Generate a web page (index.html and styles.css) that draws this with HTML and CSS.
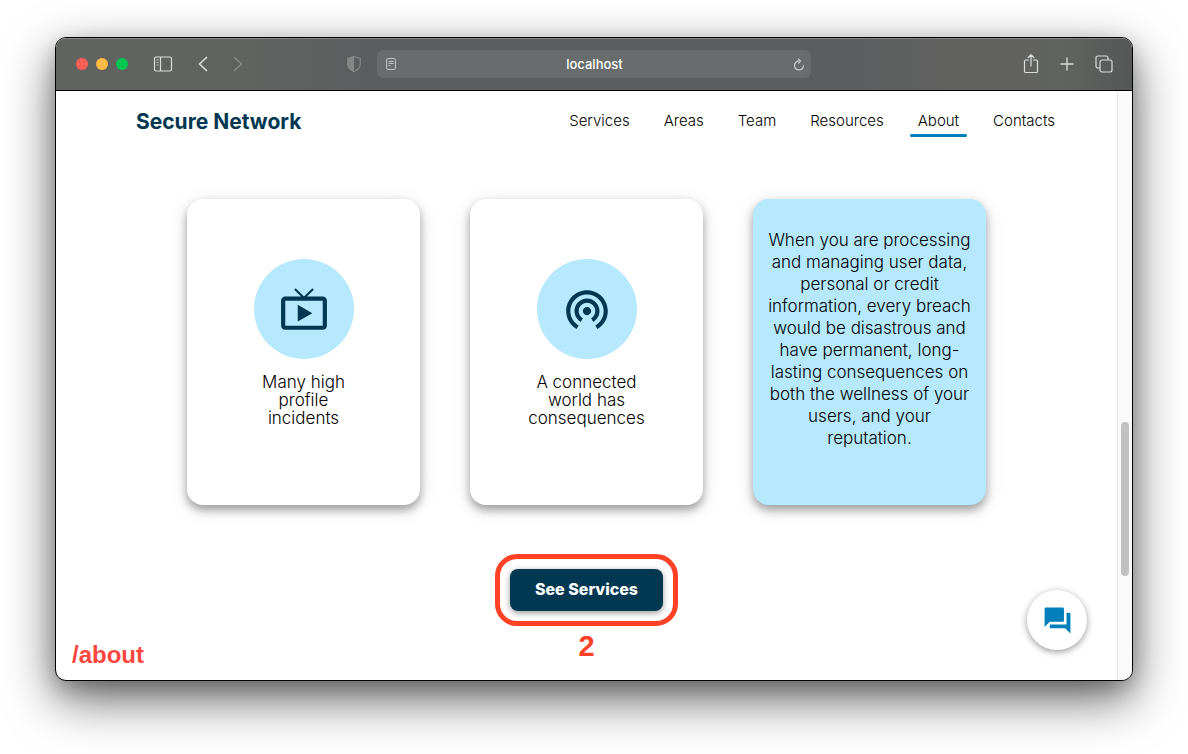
FILE: index.html
```html
<!DOCTYPE html>
<html lang="en">
<head>
<meta charset="utf-8">
<meta name="viewport" content="width=device-width, initial-scale=1">
<title>Secure Network</title>
<link rel="stylesheet" href="styles.css">
</head>
<body>
<div class="window">
  <div class="toolbar">
    <div class="toolbar-left">
      <div class="lights"><span class="light red"></span><span class="light amber"></span><span class="light green"></span></div>
      <button class="tool sidebar-btn" type="button" aria-label="Sidebar">
        <svg width="20" height="16" viewBox="0 0 20 16" fill="none" stroke="currentColor"><rect x="1.5" y="1" width="17" height="14" rx="1.5" stroke-width="1.2"/><path d="M7.500 1v14" stroke-width="1.2"/><path d="M3.500 4h2M3.500 6.500h2M3.500 9h2" stroke-width=".8"/></svg>
      </button>
      <button class="tool back-btn" type="button" aria-label="Back">
        <svg width="10" height="16" viewBox="0 0 10 16" fill="none" stroke="currentColor" stroke-width="1.700" stroke-linecap="round" stroke-linejoin="round"><path d="M8.500 1.500 1.500 8l7 6.500"/></svg>
      </button>
      <button class="tool forward-btn" type="button" aria-label="Forward">
        <svg width="10" height="16" viewBox="0 0 10 16" fill="none" stroke="currentColor" stroke-width="1.500" stroke-linecap="round" stroke-linejoin="round"><path d="m1.500 1.500 7 6.500-7 6.500"/></svg>
      </button>
      <button class="tool shield-btn" type="button" aria-label="Privacy report">
        <svg width="16" height="18" viewBox="0 0 16 18"><path d="M8 1.500 14.300 3.500V9c0 3.500-2.300 5.800-6.300 7.700C4 14.800 1.700 12.500 1.700 9V3.500z" fill="none" stroke="currentColor" stroke-width="1.200"/><path d="M8 1.500v15.200C4 14.800 1.700 12.500 1.700 9V3.500z" fill="currentColor"/></svg>
      </button>
    </div>
    <div class="address">
      <svg width="10" height="12" viewBox="0 0 10 12" fill="none" stroke="currentColor"><rect x=".6" y=".6" width="8.800" height="10.800" rx="1"/><path d="M2.500 3.500h5M2.500 5.500h5M2.500 7.500h2"/></svg>
      <input class="address-input" type="text" value="localhost" aria-label="Address">
      <button class="tool" type="button" aria-label="Reload">
        <svg width="12" height="13" viewBox="0 0 12 13" fill="none" stroke="currentColor" stroke-width="1.300"><path d="M6.500 3A4.500 4.500 0 1 0 10.500 7.500M5 .8 7.500 3.100 5.300 5.500"/></svg>
      </button>
    </div>
    <div class="toolbar-right">
      <button class="tool" type="button" aria-label="Share">
        <svg width="16" height="20" viewBox="0 0 16 20" fill="none" stroke="currentColor" stroke-width="1.200" stroke-linecap="round" stroke-linejoin="round"><path d="M5.500 6H2.800C2 6 1.500 6.500 1.500 7.300v9.900c0 .8.500 1.300 1.300 1.300h10.400c.8 0 1.300-.5 1.300-1.300V7.300c0-.8-.5-1.300-1.300-1.300h-2.700M8 12V1M5.200 3.500 8 .8l2.800 2.700"/></svg>
      </button>
      <button class="tool plus-btn" type="button" aria-label="New tab">
        <svg width="14" height="14" viewBox="0 0 14 14" fill="none" stroke="currentColor" stroke-width="1.300" stroke-linecap="round"><path d="M7 1v12M1 7h12"/></svg>
      </button>
      <button class="tool" type="button" aria-label="Tab overview">
        <svg width="18" height="18" viewBox="0 0 18 18" fill="none" stroke="currentColor" stroke-width="1.200"><rect x="5" y="5" width="12" height="12" rx="2"/><path d="M5 13H3c-1.300 0-2-.7-2-2V3c0-1.300.7-2 2-2h8c1.300 0 2 .7 2 2v2"/></svg>
      </button>
    </div>
  </div>
  <div class="viewport">
    <div class="page">
      <header class="site-header">
        <a class="brand" href="#">Secure Network</a>
        <nav class="nav">
          <a href="#">Services</a>
          <a href="#">Areas</a>
          <a href="#">Team</a>
          <a href="#">Resources</a>
          <a class="active" href="#">About</a>
          <a href="#">Contacts</a>
        </nav>
      </header>
      <main class="main">
        <section class="cards">
          <article class="card">
            <div class="disc"><svg width="50" height="50" viewBox="0 0 24 24" fill="currentColor"><path d="M21 6h-7.590l3.290-3.290L16 2l-4 4-4-4-.71.71L10.590 6H3c-1.100 0-2 .89-2 2v12c0 1.100.9 2 2 2h18c1.100 0 2-.9 2-2V8c0-1.110-.9-2-2-2zm0 14H3V8h18v12zM9 10v8l7-4z"/></svg></div>
            <p class="caption">Many high profile incidents</p>
          </article>
          <article class="card">
            <div class="disc"><svg width="50" height="50" viewBox="0 0 24 24" fill="currentColor"><path d="M12 11c-1.100 0-2 .9-2 2s.9 2 2 2 2-.9 2-2-.9-2-2-2zm6 2c0-3.310-2.690-6-6-6s-6 2.690-6 6c0 2.220 1.210 4.150 3 5.190l1-1.740c-1.190-.7-2-1.970-2-3.450 0-2.210 1.790-4 4-4s4 1.790 4 4c0 1.480-.81 2.750-2 3.450l1 1.740c1.790-1.040 3-2.970 3-5.190zM12 3C6.480 3 2 7.480 2 13c0 3.700 2.010 6.920 4.990 8.650l1-1.730C5.610 18.530 4 15.960 4 13c0-4.420 3.580-8 8-8s8 3.580 8 8c0 2.960-1.610 5.530-4 6.920l1 1.730c2.990-1.730 5-4.950 5-8.650 0-5.520-4.480-10-10-10z"/></svg></div>
            <p class="caption">A connected world has consequences</p>
          </article>
          <article class="card card-filled">
            <p class="blurb">When you are processing and managing user data, personal or credit information, every breach would be disastrous and have permanent, long-<wbr>lasting consequences on both the wellness of your users, and your reputation.</p>
          </article>
        </section>
        <div class="cta">
          <div class="ring"><button class="cta-btn" type="button">See Services</button></div>
          <span class="step">2</span>
        </div>
      </main>
      <span class="route">/about</span>
      <button class="chat" type="button" aria-label="Chat">
        <svg width="31" height="31" viewBox="0 0 24 24" fill="currentColor"><path d="M21 6h-2v9H6v2c0 .55.45 1 1 1h11l4 4V7c0-.55-.45-1-1-1zm-4 6V3c0-.55-.45-1-1-1H3c-.55 0-1 .45-1 1v14l4-4h10c.55 0 1-.45 1-1z"/></svg>
      </button>
    </div>
    <div class="scrollbar"><div class="thumb"></div></div>
  </div>
</div>
</body>
</html>
```

FILE: styles.css
```css
* { box-sizing: border-box; }

body {
  margin: 0;
  min-height: 100vh;
  padding: 37px 55px 73px;
  display: flex;
  background: #fff;
  color: #000;
  font-family: Inter, "Liberation Sans", sans-serif;
  overflow: hidden;
}

button { border: 0; padding: 0; background: none; font: inherit; color: inherit; }
a { color: inherit; text-decoration: none; }
svg { display: block; }
p { margin: 0; }

.window {
  flex: 1;
  min-width: 0;
  display: flex;
  flex-direction: column;
  border: 1px solid #000;
  border-radius: 11px;
  overflow: hidden;
  background: #fff;
  box-shadow: 0 18px 50px rgba(0, 0, 0, .6), 0 8px 20px rgba(0, 0, 0, .2);
}

/* Browser toolbar */
.toolbar {
  display: grid;
  grid-template-columns: 1fr minmax(0, 434px) 1fr;
  align-items: center;
  height: 53px;
  border-bottom: 1px solid #000;
  box-shadow: inset 0 1px #868888;
  background: linear-gradient(90deg, #616361 0%, #616361 18%, #5a5e5e 29%, #5a5e5e 74%, #616160 83%, #616361 94%, #555756 100%);
  color: #dcdedd;
}
.toolbar-left { display: flex; align-items: center; padding: 0 15px 0 20px; }
.lights { display: flex; gap: 8px; }
.light { width: 12px; height: 12px; border-radius: 50%; }
.red { background: #ff5f57; }
.amber { background: #ffbb48; }
.green { background: #00c853; }
.sidebar-btn { margin-left: 25px; }
.back-btn { margin-left: 25px; }
.forward-btn { margin-left: 25px; color: #868987; }
.shield-btn { margin-left: auto; color: #858887; }
.address {
  display: flex;
  align-items: center;
  height: 28px;
  padding: 0 6px 0 9px;
  border-radius: 6px;
  background: #686c6c;
  color: #c6c9c8;
}
.address-input {
  flex: 1;
  min-width: 0;
  border: 0;
  padding: 0;
  background: none;
  color: #fff;
  font: 500 13px/20px Inter, "Liberation Sans", sans-serif;
  text-align: center;
}
.toolbar-right { display: flex; align-items: center; justify-content: flex-end; padding-right: 19px; }
.plus-btn { margin: 0 21px; }

/* Page area */
.viewport { flex: 1; display: flex; min-height: 0; }
.page { position: relative; flex: 1; min-width: 0; }
.scrollbar {
  width: 15px;
  padding: 0 3px;
  display: grid;
  grid-template-rows: 331fr 154fr 104fr;
  border-left: 1px solid #e6e6e6;
  background: #fafafa;
}
.thumb { grid-row: 2; width: 8px; border-radius: 4px; background: #c1c1c1; }

.site-header {
  display: flex;
  align-items: center;
  justify-content: space-between;
  height: 60px;
  padding: 0 54px 0 80px;
}
.brand { color: #003751; font-size: 21px; font-weight: 700; }
.nav { display: flex; gap: 18px; font-size: 15px; line-height: 24px; font-weight: 300; }
.nav a { position: relative; padding: 4px 8px; }
.nav .active::after {
  content: "";
  position: absolute;
  left: 0;
  right: 0;
  bottom: 0;
  height: 3px;
  border-radius: 2px;
  background: #007fbb;
}

.main { padding-top: 48px; }
.cards {
  display: grid;
  grid-template-columns: repeat(3, 233px);
  justify-content: center;
  gap: 50px;
}
.card {
  display: flex;
  flex-direction: column;
  align-items: center;
  min-height: 306px;
  padding: 60px 14px 16px;
  border-radius: 16px;
  background: #fff;
  text-align: center;
  box-shadow: 0 5px 8px rgba(0, 0, 0, .32), 0 4px 20px rgba(0, 0, 0, .12);
}
.card-filled { padding-top: 30px; background: #b6e9fd; }
.disc {
  display: grid;
  place-items: center;
  width: 100px;
  height: 100px;
  border-radius: 50%;
  background: #b6e9fd;
  color: #003751;
}
.caption { width: 120px; margin-top: 14px; font-size: 17px; line-height: 18px; font-weight: 300; }
.blurb { font-size: 17px; line-height: 22px; font-weight: 300; }

.cta { display: flex; flex-direction: column; align-items: center; margin-top: 49px; }
.ring { padding: 10px; border: 5px solid #ff4125; border-radius: 22px; }
.cta-btn {
  display: block;
  height: 42px;
  min-width: 153px;
  padding: 0 16px 3px;
  border-radius: 8px;
  background: #003751;
  color: #fff;
  font-size: 16px;
  font-weight: 800;
  box-shadow: 0 2px 6px rgba(0, 0, 0, .4);
}
.step, .route { font-family: "Liberation Sans", sans-serif; font-weight: 700; }
.step { margin-top: 4px; color: #ff4125; font-size: 29px; line-height: 32px; }
.route { position: absolute; left: 16px; bottom: 11px; color: #ff4740; font-size: 24px; line-height: 28px; }
.chat {
  position: absolute;
  right: 30px;
  bottom: 30px;
  display: grid;
  place-items: center;
  width: 60px;
  height: 60px;
  border-radius: 50%;
  background: #fff;
  color: #007fbb;
  box-shadow: 0 2px 7px rgba(0, 0, 0, .4);
}
```
